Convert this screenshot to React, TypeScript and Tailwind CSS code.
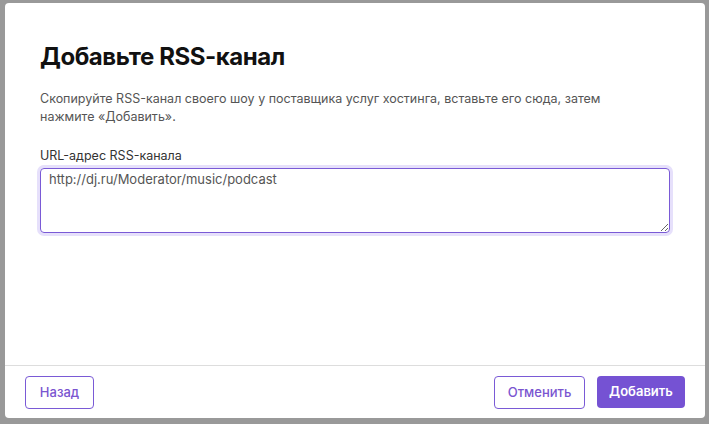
import React from "react";

export default function App() {
  return (
    <div className="w-[709px] h-[424px] bg-[#999999] pt-[3px] px-[5px] pb-[6px] flex" style={{ fontFamily: "Inter, 'Noto Sans', sans-serif" }}>
      <div className="flex-1 bg-white rounded-[4px] flex flex-col">
        <div className="flex-1 px-[35px] pt-[40px]">
          <h1 className="text-[24px] leading-[28px] font-bold text-[#111111] tracking-[-0.45px]">Добавьте RSS-канал</h1>
          <p className="mt-[19px] text-[12.5px] leading-[18px] text-[#555555] w-[600px]">
            Скопируйте RSS-канал своего шоу у поставщика услуг хостинга, вставьте его сюда, затем нажмите «Добавить».
          </p>
          <div className="mt-[22px] text-[12.5px] leading-[16px] text-[#333333]">URL-адрес RSS-канала</div>
          <textarea
            defaultValue="http://dj.ru/Moderator/music/podcast"
            className="mt-[4px] block w-[630px] h-[65px] rounded-[4px] border border-[#7a5ad6] ring-[3px] ring-[#e6e0fb] px-[8px] py-[1px] text-[13px] leading-[18px] text-[#555555] outline-none"
            style={{ fontFamily: "Inter, 'Noto Sans', sans-serif" }}
          />
        </div>
        <div className="border-t border-[#dddddd] flex items-center justify-between px-[20px] pt-[10px] pb-[9px]">
          <button className="h-[33px] w-[69px] rounded-[4px] border border-[#7a5ad6] text-[#7a55d0] text-[13px] font-medium">Назад</button>
          <div className="flex gap-[12px]">
            <button className="h-[33px] w-[91px] rounded-[4px] border border-[#7a5ad6] text-[#7a55d0] text-[13px] font-medium">Отменить</button>
            <button className="h-[32px] w-[88px] rounded-[4px] bg-[#7552d3] text-white text-[13px] font-semibold">Добавить</button>
          </div>
        </div>
      </div>
    </div>
  );
}
